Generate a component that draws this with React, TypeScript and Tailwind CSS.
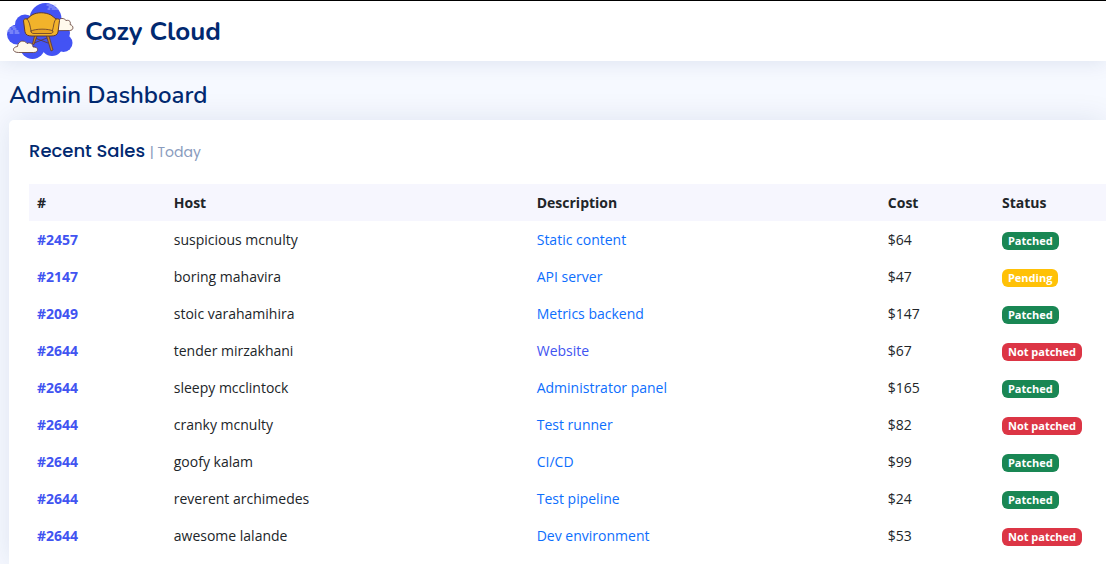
type Status = 'Patched' | 'Pending' | 'Not patched';

interface Sale {
  id: string;
  host: string;
  description: string;
  visited?: boolean;
  cost: string;
  status: Status;
}

const sales: Sale[] = [
  { id: '#2457', host: 'suspicious mcnulty', description: 'Static content', cost: '$64', status: 'Patched' },
  { id: '#2147', host: 'boring mahavira', description: 'API server', cost: '$47', status: 'Pending' },
  { id: '#2049', host: 'stoic varahamihira', description: 'Metrics backend', cost: '$147', status: 'Patched' },
  { id: '#2644', host: 'tender mirzakhani', description: 'Website', visited: true, cost: '$67', status: 'Not patched' },
  { id: '#2644', host: 'sleepy mcclintock', description: 'Administrator panel', cost: '$165', status: 'Patched' },
  { id: '#2644', host: 'cranky mcnulty', description: 'Test runner', cost: '$82', status: 'Not patched' },
  { id: '#2644', host: 'goofy kalam', description: 'CI/CD', cost: '$99', status: 'Patched' },
  { id: '#2644', host: 'reverent archimedes', description: 'Test pipeline', cost: '$24', status: 'Patched' },
  { id: '#2644', host: 'awesome lalande', description: 'Dev environment', cost: '$53', status: 'Not patched' },
];

const badgeColors: Record<Status, string> = {
  Patched: 'bg-[#198754]',
  Pending: 'bg-[#ffc107]',
  'Not patched': 'bg-[#dc3545]',
};

function Logo() {
  return (
    <svg viewBox="0 0 68 58" className="h-[58px] w-[68px] shrink-0" aria-hidden="true">
      <g fill="#4353f4">
        <circle cx="39.5" cy="17" r="16" />
        <circle cx="19" cy="22.5" r="10" />
        <circle cx="11" cy="32.5" r="10" />
        <circle cx="26.5" cy="44.5" r="12.5" />
        <circle cx="46" cy="43" r="11" />
        <circle cx="57.5" cy="41" r="9" />
        <circle cx="55" cy="31" r="9" />
        <rect x="16" y="18" width="38" height="28" />
      </g>
      <g fill="none" stroke="#c3cbff" strokeLinecap="round" opacity="0.8">
        <path d="M41 3h5M48 3h2M43 5h6M42 7h2M46 7h6M6 25h3M3 27h2M7 27h3M1 29h6M9 29h3M4 31h3M9 31h4" />
      </g>
      <g stroke="#5d3831" strokeLinejoin="round" strokeLinecap="round">
        <path d="M50 28.5c-2-1-1-5 2-6c-1-6 5-8 8-4c4-1 5 2 4 4c4 1 4 6 0 6Z" fill="#fff9ec" strokeWidth="0.8" />
        <path d="m29 36 13 5M41 36l-13 5" fill="none" strokeWidth="0.8" />
        <path d="m28.500 34-2 8 1.500.5 3-8.500ZM40.500 34l4.500 15 2-1-4-14Z" fill="#c88425" strokeWidth="0.8" />
        <path
          d="M17.500 18.500c0-1.500 2-2 3.500-1.500 2-.5 2.500-3 5-4 5-3 13-3 19 0 2 1 3 3 5 4 2-.5 3.500 0 3.500 1.500L52 30c-.5 3-3 4-7 4H26c-4 0-6.500-1-7-4Z"
          fill="#f2b32b"
        />
        <path d="M21 17c2.500 2 3 7 4 11.500M50 17c-2.500 2-2 7-3.500 11.500" fill="none" strokeWidth="0.8" />
        <path d="M25 29c4-2.500 18-2.500 22 0 0 2-1 2.500-3 2.500H28c-2 0-3-.5-3-2.500Z" fill="#e8a424" strokeWidth="0.8" />
        <path d="M12 50.500c-6 0-6-5.500-.5-6 .5-6 7-7 9.500-3 4-1.500 6 1 6 3.500 6-.5 6 5.500 1 5.500Z" fill="#fff9ec" strokeWidth="0.8" />
      </g>
    </svg>
  );
}

export default function App() {
  return (
    <div className="flex min-h-screen flex-col bg-[#f6f9ff] font-['Open_Sans',sans-serif] text-sm text-[#212529]">
      <header className="relative flex h-[61px] items-center border-t border-black bg-white pl-1.5 shadow-[0_2px_20px_rgba(1,41,112,0.1)]">
        <a href="#home" className="flex items-center gap-[11px]">
          <Logo />
          <span className="pt-px font-[Nunito,sans-serif] text-[26px] leading-8 font-bold text-[#012970]">
            Cozy Cloud
          </span>
        </a>
      </header>

      <main className="flex grow flex-col pl-[9px]">
        <h1 className="pt-[19px] pb-2.5 font-[Nunito,sans-serif] text-2xl leading-[30px] font-semibold text-[#012970]">
          Admin Dashboard
        </h1>

        <section className="grow rounded-tl-[5px] bg-white pl-5 shadow-[0_0_30px_rgba(1,41,112,0.1)]">
          <h2 className="pt-5 pb-[22px] font-[Poppins,sans-serif] text-lg leading-[22px] font-medium text-[#012970]">
            Recent Sales <span className="text-sm font-normal text-[#899bbd]">| Today</span>
          </h2>

          <table className="w-full table-fixed text-left leading-[21px]">
            <colgroup>
              <col className="w-[12.7%]" />
              <col className="w-[33.7%]" />
              <col className="w-[32.6%]" />
              <col className="w-[10.6%]" />
              <col />
            </colgroup>
            <thead className="bg-[#f6f6fe]">
              <tr>
                {['#', 'Host', 'Description', 'Cost', 'Status'].map((label) => (
                  <th key={label} scope="col" className="p-2 font-bold">
                    {label}
                  </th>
                ))}
              </tr>
            </thead>
            <tbody>
              {sales.map((sale) => (
                <tr key={sale.host}>
                  <th scope="row" className="p-2 font-bold">
                    <a href="#sale" className="text-[#4154f1]">{sale.id}</a>
                  </th>
                  <td className="p-2">{sale.host}</td>
                  <td className="p-2">
                    <a href="#host" className={sale.visited ? 'text-[#4154f1]' : 'text-[#0d6efd]'}>
                      {sale.description}
                    </a>
                  </td>
                  <td className="p-2">{sale.cost}</td>
                  <td className="px-2 pt-[11px] pb-2">
                    <span className={`block w-fit rounded-md px-1.5 text-[11px] leading-[18px] font-bold whitespace-nowrap text-white ${badgeColors[sale.status]}`}>
                      {sale.status}
                    </span>
                  </td>
                </tr>
              ))}
            </tbody>
          </table>
        </section>
      </main>
    </div>
  );
}
